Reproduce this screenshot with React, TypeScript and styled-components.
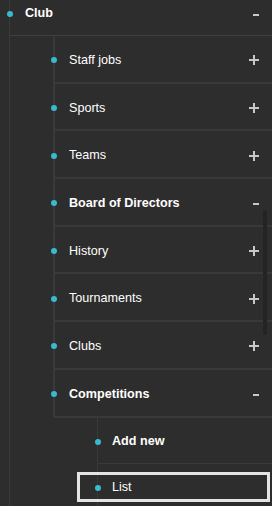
import React from "react";
import styled, { createGlobalStyle, css } from "styled-components";

const GlobalStyle = createGlobalStyle`
  html, body {
    margin: 0;
    padding: 0;
    background: #2d2d2d;
    overflow: hidden;
  }
  body {
    font-family: "Liberation Sans", Arial, sans-serif;
  }
`;

type Level = 0 | 1 | 2;

interface Node {
  label: string;
  bold?: boolean;
  toggle?: "plus" | "minus";
  focused?: boolean;
  children?: Node[];
}

const data: Node[] = [
  {
    label: "Club",
    bold: true,
    toggle: "minus",
    children: [
      { label: "Staff jobs", toggle: "plus" },
      { label: "Sports", toggle: "plus" },
      { label: "Teams", toggle: "plus" },
      { label: "Board of Directors", bold: true, toggle: "minus" },
      { label: "History", toggle: "plus" },
      { label: "Tournaments", toggle: "plus" },
      { label: "Clubs", toggle: "plus" },
      {
        label: "Competitions",
        bold: true,
        toggle: "minus",
        children: [
          { label: "Add new", bold: true },
          { label: "List", focused: true },
        ],
      },
    ],
  },
];

const Viewport = styled.div`
  position: relative;
  width: 272px;
  height: 506px;
  overflow: hidden;
  background: #2d2d2d;
`;

const List = styled.ul<{ $level: Level }>`
  list-style: none;
  padding: 0;
  margin: 0;
  ${({ $level }) =>
    $level === 0 &&
    css`
      margin: -11px 0 0 9px;
      border-left: 1px solid #3a3a3a;
    `}
  ${({ $level }) =>
    $level === 1 &&
    css`
      margin-left: 43px;
    `}
  ${({ $level }) =>
    $level === 2 &&
    css`
      margin-left: 44px;
    `}
`;

const Item = styled.li`
  margin: 0;
  padding: 0;
`;

const Row = styled.div<{ $level: Level; $focused?: boolean }>`
  position: relative;
  display: flex;
  align-items: center;
  box-sizing: content-box;
  padding-right: 13px;
  padding-top: 3px;
  ${({ $level }) =>
    $level === 0 &&
    css`
      height: 43px;
      padding-left: 15px;
      border-bottom: 1px solid #3e3e3e;
    `}
  ${({ $level }) =>
    $level === 1 &&
    css`
      height: 42.7px;
      padding-left: 14px;
      border-left: 2px solid #393939;
      border-bottom: 2px solid #393939;
    `}
  ${({ $level }) =>
    $level === 2 &&
    css`
      height: 42px;
      padding-left: 14px;
      border-left: 1px solid #393939;
      border-bottom: 1px solid #393939;
    `}
  ${({ $focused }) =>
    $focused &&
    css`
      &::after {
        content: "";
        position: absolute;
        left: -21px;
        top: 8px;
        width: 193px;
        height: 30px;
        box-sizing: border-box;
        border: 3px solid #e4e4e4;
        pointer-events: none;
      }
    `}
`;

const Dot = styled.span<{ $level: Level }>`
  position: absolute;
  top: calc(50% + 1.5px);
  width: 6px;
  height: 6px;
  margin-top: -3px;
  border-radius: 50%;
  background: #36bccd;
  left: ${({ $level }) => ($level === 1 ? "-4px" : "-3px")};
`;

const Label = styled.span<{ $bold?: boolean }>`
  flex: 1;
  color: #ffffff;
  font-size: 12.6px;
  line-height: 15px;
  font-weight: ${({ $bold }) => ($bold ? 700 : 400)};
  white-space: nowrap;
`;

const Toggle = styled.span<{ $kind: "plus" | "minus" }>`
  position: relative;
  flex: none;
  ${({ $kind }) =>
    $kind === "plus"
      ? css`
          width: 10px;
          height: 10px;
          &::before,
          &::after {
            content: "";
            position: absolute;
            background: #c8c8c8;
          }
          &::before {
            left: 0;
            right: 0;
            top: 4px;
            height: 2px;
          }
          &::after {
            top: 0;
            bottom: 0;
            left: 4px;
            width: 2px;
          }
        `
      : css`
          width: 6px;
          height: 2px;
          margin-top: 2px;
          background: #c8c8c8;
        `}
`;

const ScrollThumb = styled.div`
  position: absolute;
  right: 5px;
  top: 210px;
  width: 4px;
  height: 125px;
  border-radius: 2px;
  background: #242424;
`;

function TreeNodes({ nodes, level }: { nodes: Node[]; level: Level }) {
  return (
    <List $level={level}>
      {nodes.map((n) => (
        <Item key={n.label}>
          <Row $level={level} $focused={n.focused}>
            <Dot $level={level} />
            <Label $bold={n.bold}>{n.label}</Label>
            {n.toggle && <Toggle $kind={n.toggle} />}
          </Row>
          {n.children && (
            <TreeNodes nodes={n.children} level={(level + 1) as Level} />
          )}
        </Item>
      ))}
    </List>
  );
}

export default function App() {
  return (
    <>
      <GlobalStyle />
      <Viewport>
        <TreeNodes nodes={data} level={0} />
        <ScrollThumb />
      </Viewport>
    </>
  );
}
